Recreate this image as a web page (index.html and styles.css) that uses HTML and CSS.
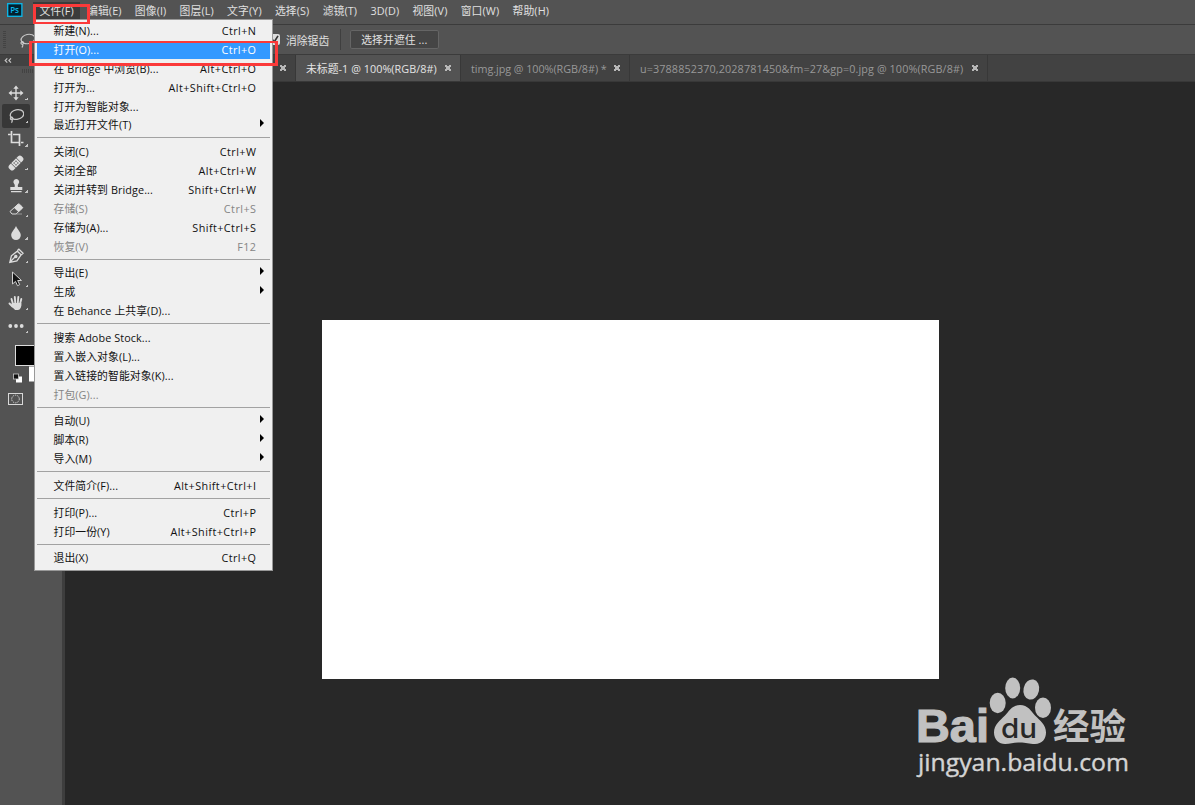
FILE: index.html
```html
<!DOCTYPE html>
<html lang="zh-CN">
<head>
    <meta charset="UTF-8">
    <meta name="viewport" content="width=device-width, initial-scale=1.0">
    <title>Photoshop</title>
    <link rel="stylesheet" href="styles.css">
</head>
<body>
    <div class="menubar">
        <svg class="ps-logo" viewBox="0 0 16 14">
            <rect x="0.7" y="0.7" width="14.2" height="12.6" fill="#03202e" stroke="#0cb9ec" stroke-width="1.3"/>
            <text x="3.2" y="10" font-family="Open Sans, sans-serif" font-size="8" font-weight="600" fill="#0cb9ec">Ps</text>
        </svg>
        <div class="menu-title open">文件(F)</div>
        <div class="menu-title">编辑(E)</div>
        <div class="menu-title">图像(I)</div>
        <div class="menu-title">图层(L)</div>
        <div class="menu-title">文字(Y)</div>
        <div class="menu-title">选择(S)</div>
        <div class="menu-title">滤镜(T)</div>
        <div class="menu-title">3D(D)</div>
        <div class="menu-title">视图(V)</div>
        <div class="menu-title">窗口(W)</div>
        <div class="menu-title">帮助(H)</div>
    </div>

    <div class="options-bar">
        <div class="grip"></div>
        <svg class="lasso-option" viewBox="0 0 18 18" fill="none" stroke="#c8c8c8" stroke-width="1.2">
            <ellipse cx="10" cy="7" rx="7" ry="4.6" transform="rotate(-12 10 7)"/>
            <path d="M4 9.5c-2 1.5-.8 3.2.8 2.6s.6-2.6-.9-2.5M4.6 12c.6 1.5.4 2.5-.8 3.5"/>
        </svg>
        <div class="checkbox">
            <svg viewBox="0 0 10 10"><path d="M2 5l2.2 3L8 1.8" fill="none" stroke="#333" stroke-width="1.6"/></svg>
        </div>
        <span class="option-label">消除锯齿</span>
        <div class="option-divider"></div>
        <div class="mask-button">选择并遮住 ...</div>
    </div>

    <div class="workspace">
        <div class="tools">
            <div class="tools-header">
                <svg viewBox="0 0 8 5" fill="none" stroke="#c4c4c4" stroke-width="1.2"><path d="M3.3.4L1.2 2.5l2.1 2.1M7 .4L4.9 2.5 7 4.6"/></svg>
            </div>
            <div class="tools-grip"></div>
            <div class="tool">
                <svg viewBox="0 0 16 16" fill="#dcdcdc"><path d="M8 .5l2.700 3.200H8.700v3.600h3.600V5.300L15.500 8l-3.200 2.700V8.700H8.700v3.600h2L8 15.500l-2.700-3.200h2V8.700H3.700v2L.5 8l3.200-2.700v2h3.600V3.700h-2z"/></svg>
            </div>
            <div class="tool selected">
                <svg viewBox="0 0 16 16" fill="none" stroke="#c8c8c8" stroke-width="1.3"><ellipse cx="9" cy="6.5" rx="6.8" ry="4.8" transform="rotate(-12 9 6.5)"/><path d="M3.400 9c-1.900 1.400-.8 3 .7 2.500s.6-2.400-.8-2.300M4.100 11.500c.5 1.300.3 2.200-.6 3.200"/></svg>
            </div>
            <div class="tool">
                <svg viewBox="0 0 16 16" fill="none" stroke="#dcdcdc" stroke-width="1.7"><path d="M3.500 0v11.500H12M0 3.500h2.500M5 3.500h6.500V15M13 11.500h2.500"/></svg>
            </div>
            <div class="tool">
                <svg viewBox="0 0 16 16"><g transform="rotate(-45 8 8)"><rect x="-.7" y="4.800" width="17.400" height="6.400" rx="2.500" fill="#dcdcdc"/><path d="M4.300 4.500v7M11.700 4.500v7" stroke="#535353" stroke-width=".8"/><g fill="#535353"><circle cx="6.700" cy="6.700" r=".7"/><circle cx="9.300" cy="6.700" r=".7"/><circle cx="6.700" cy="9.300" r=".7"/><circle cx="9.300" cy="9.300" r=".7"/></g></g></svg>
            </div>
            <div class="tool">
                <svg viewBox="0 0 16 16" fill="#dcdcdc"><path d="M8.300 1a2.900 2.900 0 0 1 2.200 4.800C9.700 6.800 9.700 8 10 9h4.300v3H2.300V9h4.300c.3-1 .3-2.200-.5-3.200A2.900 2.900 0 0 1 8.300 1zM3 13h10.600v1.300H3z"/></svg>
            </div>
            <div class="tool">
                <svg viewBox="0 0 16 16"><path d="M2 10.500L10 3.200q.7-.6 1.400 0l3 2.800q.6.6 0 1.200L8 13H4z" fill="none" stroke="#dcdcdc"/><path d="M6.200 7L10 3.200q.7-.6 1.400 0l3 2.800q.6.6 0 1.200L10.500 11z" fill="#dcdcdc"/><path d="M8 13h6" stroke="#aaa" stroke-width=".8"/></svg>
            </div>
            <div class="tool">
                <svg viewBox="0 0 16 16" fill="#dcdcdc"><path d="M8 1c1 2.900 4.800 6 4.800 9.300a4.800 4.800 0 0 1-9.600 0C3.200 7 7 3.900 8 1z"/></svg>
            </div>
            <div class="tool">
                <svg viewBox="0 0 16 16" fill="none" stroke="#dcdcdc" stroke-width="1.3"><path d="M1.800 14.300L3.400 7.800 9.300 3.200l3.800 3.600-4.200 6zM2 14l5-5M9.200 2.800l1.700-1.600 4.200 4-1.800 1.700"/><circle cx="7.800" cy="8.500" r="1.100" fill="#dcdcdc"/></svg>
            </div>
            <div class="tool">
                <svg viewBox="0 0 16 16"><path d="M4.500 1v12l3-2.600 2 4.300 2.200-1-2-4.200h3.800z" fill="#141414" stroke="#d0d0d0" stroke-width="1"/></svg>
            </div>
            <div class="tool">
                <svg viewBox="0 0 16 16" fill="none" stroke="#dcdcdc" stroke-width="1.9" stroke-linecap="round"><path d="M5 9L3.500 4M7.300 8L6.800 2M9.800 8l.5-6M12 9l1.300-5M4.500 11.500L1.500 8.500"/><path d="M4.500 9h8c.3 2-1 5-2.500 5H7.500L4 10.500z" fill="#dcdcdc"/></svg>
            </div>
            <div class="tool">
                <svg viewBox="0 0 16 16" fill="#dcdcdc"><circle cx="2.300" cy="8" r="1.900"/><circle cx="8" cy="8" r="1.900"/><circle cx="13.700" cy="8" r="1.900"/></svg>
            </div>
            <svg class="swatches" viewBox="0 0 54 70">
                <rect x="29" y="28.500" width="22" height="15" fill="#fff"/>
                <rect x="15.500" y="7.500" width="22" height="20" fill="#000" stroke="#ddd"/>
                <rect x="16" y="38.500" width="6" height="6" fill="#fff"/>
                <rect x="13.500" y="36" width="5" height="5" fill="#111" stroke="#ccc" stroke-width=".8"/>
                <rect x="8.500" y="55.500" width="14" height="11" fill="none" stroke="#d8d8d8"/>
                <circle cx="15.500" cy="61" r="3.800" fill="none" stroke="#d8d8d8" stroke-dasharray="1.4 1"/>
            </svg>
        </div>

        <div class="documents">
            <div class="tabs">
                <div class="tab first"><span></span><i class="close"></i></div>
                <div class="tab active"><span>未标题-1 @ 100%(RGB/8#)</span><i class="close"></i></div>
                <div class="tab timg"><span>timg.jpg @ 100%(RGB/8#) *</span><i class="close"></i></div>
                <div class="tab long"><span>u=3788852370,2028781450&amp;fm=27&amp;gp=0.jpg @ 100%(RGB/8#)</span><i class="close"></i></div>
            </div>
            <div class="canvas-area">
                <div class="artboard"></div>
            </div>
        </div>
    </div>

    <div class="file-menu">
        <div class="item"><span>新建(N)...</span><kbd>Ctrl+N</kbd></div>
        <div class="item highlight"><span>打开(O)...</span><kbd>Ctrl+O</kbd></div>
        <div class="item"><span>在 Bridge 中浏览(B)...</span><kbd>Alt+Ctrl+O</kbd></div>
        <div class="item"><span>打开为...</span><kbd>Alt+Shift+Ctrl+O</kbd></div>
        <div class="item"><span>打开为智能对象...</span></div>
        <div class="item submenu"><span>最近打开文件(T)</span></div>
        <div class="separator"></div>
        <div class="item"><span>关闭(C)</span><kbd>Ctrl+W</kbd></div>
        <div class="item"><span>关闭全部</span><kbd>Alt+Ctrl+W</kbd></div>
        <div class="item"><span>关闭并转到 Bridge...</span><kbd>Shift+Ctrl+W</kbd></div>
        <div class="item disabled"><span>存储(S)</span><kbd>Ctrl+S</kbd></div>
        <div class="item"><span>存储为(A)...</span><kbd>Shift+Ctrl+S</kbd></div>
        <div class="item disabled"><span>恢复(V)</span><kbd>F12</kbd></div>
        <div class="separator"></div>
        <div class="item submenu"><span>导出(E)</span></div>
        <div class="item submenu"><span>生成</span></div>
        <div class="item"><span>在 Behance 上共享(D)...</span></div>
        <div class="separator"></div>
        <div class="item"><span>搜索 Adobe Stock...</span></div>
        <div class="item"><span>置入嵌入对象(L)...</span></div>
        <div class="item"><span>置入链接的智能对象(K)...</span></div>
        <div class="item disabled"><span>打包(G)...</span></div>
        <div class="separator"></div>
        <div class="item submenu"><span>自动(U)</span></div>
        <div class="item submenu"><span>脚本(R)</span></div>
        <div class="item submenu"><span>导入(M)</span></div>
        <div class="separator"></div>
        <div class="item"><span>文件简介(F)...</span><kbd>Alt+Shift+Ctrl+I</kbd></div>
        <div class="separator"></div>
        <div class="item"><span>打印(P)...</span><kbd>Ctrl+P</kbd></div>
        <div class="item"><span>打印一份(Y)</span><kbd>Alt+Shift+Ctrl+P</kbd></div>
        <div class="separator"></div>
        <div class="item"><span>退出(X)</span><kbd>Ctrl+Q</kbd></div>
    </div>

    <div class="mark mark-title"></div>
    <div class="mark mark-item"></div>

    <svg class="watermark" viewBox="900 660 250 145">
        <g fill="#c1c1c1">
            <ellipse cx="997.700" cy="703" rx="8" ry="10.200"/>
            <ellipse cx="1012.700" cy="688" rx="7.500" ry="10.400"/>
            <ellipse cx="1031.300" cy="689.500" rx="7.800" ry="10.200" transform="rotate(12 1031.300 689.500)"/>
            <ellipse cx="1043" cy="707.700" rx="8" ry="10.200"/>
            <path d="M1020 705c-8 0-11 6-15 10.500-5 5-11 9-11 17 0 7 5 11.500 11 11.500 6 0 9-1.500 15-1.500s9 1.500 15 1.500c7 0 11-5 11-11.500 0-8-6-12-11-17-4-4.500-7-10.500-15-10.500z"/>
            <text class="brand" x="916" y="742" font-size="46" textLength="73" lengthAdjust="spacingAndGlyphs">Bai</text>
            <text class="brand-cjk" x="1053" y="740" font-size="36" textLength="73" lengthAdjust="spacingAndGlyphs">经验</text>
        </g>
        <text class="brand-du" x="1001" y="738" font-size="27" textLength="36" lengthAdjust="spacingAndGlyphs" fill="#282828">du</text>
        <text class="site" x="918" y="771" font-size="24" textLength="211" lengthAdjust="spacingAndGlyphs" fill="#d4d4d4">jingyan.baidu.com</text>
    </svg>
</body>
</html>
```

FILE: styles.css
```css
body {
    margin: 0;
    width: 1195px;
    height: 805px;
    display: flex;
    flex-direction: column;
    position: relative;
    overflow: hidden;
    background: #535353;
    color: #e0e0e0;
    font-family: "Open Sans", "Noto Sans CJK SC", sans-serif;
    font-size: 10.8px;
    white-space: nowrap;
}

.menubar {
    display: flex;
    align-items: center;
    height: 25px;
    box-sizing: border-box;
    padding: 0 0 4px 7px;
    border-bottom: 1px solid #3b3b3b;
}

.ps-logo {
    width: 16px;
    height: 14px;
    margin-right: 10px;
}

.menu-title {
    padding: 0 6.6px;
    height: 17px;
    line-height: 17px;
    letter-spacing: 0.13px;
}

.menu-title.open {
    background: #3b3b3b;
}

.options-bar {
    display: flex;
    align-items: center;
    height: 30px;
    box-sizing: border-box;
    border-bottom: 1px solid #3b3b3b;
}

.grip {
    width: 3px;
    height: 17px;
    margin: 0 12px 0 3px;
    background: repeating-linear-gradient(#434343 0 1px, #535353 1px 2px);
}

.lasso-option {
    width: 18px;
    height: 18px;
    margin-top: 2px;
}

.checkbox {
    width: 10px;
    height: 11px;
    margin-left: 234px;
    background: #dcdcdc;
    border-radius: 2px;
}

.checkbox svg {
    display: block;
}

.option-label {
    margin-left: 6px;
    line-height: 16px;
    padding-top: 2px;
}

.option-divider {
    width: 1px;
    height: 21px;
    margin: 0 9px 0 11px;
    background: #3f3f3f;
}

.mask-button {
    width: 89px;
    height: 19px;
    line-height: 20px;
    box-sizing: border-box;
    padding-left: 11px;
    letter-spacing: 0.1px;
    background: #454545;
    box-shadow: 0 0 0 1px #656565 inset;
    border-radius: 2px;
}

.workspace {
    flex: 1;
    display: flex;
}

.tools {
    width: 65px;
    box-sizing: border-box;
    border-right: 3px solid #3e3e3e;
    display: flex;
    flex-direction: column;
}

.tools-header {
    height: 11px;
    background: #424242;
}

.tools-header svg {
    display: block;
    width: 8px;
    height: 5px;
    padding: 3px 0 0 4px;
}

.tools-grip {
    width: 20px;
    height: 4px;
    margin: 3px 0 8px 22px;
    background: repeating-linear-gradient(90deg, #434343 0 1px, #535353 1px 2px);
}

.tool {
    width: 28px;
    height: 23.35px;
    margin-left: 2px;
    display: flex;
    align-items: center;
    justify-content: center;
    background: linear-gradient(135deg, transparent 50%, #c4c4c4 50%) 23px 16px / 3px 3px no-repeat;
}

.tool.selected {
    background-color: #373737;
    border-radius: 2px;
}

.tool svg {
    width: 16px;
    height: 16px;
}

.swatches {
    width: 54px;
    height: 70px;
}

.documents {
    flex: 1;
    display: flex;
    flex-direction: column;
}

.tabs {
    display: flex;
    height: 27px;
    box-sizing: border-box;
    background: #424242;
    border-bottom: 1px solid #383838;
    color: #989898;
}

.tab {
    display: flex;
    align-items: center;
    justify-content: space-between;
    box-sizing: border-box;
    padding: 0 9px 0 10px;
    border-right: 1px solid #383838;
}

.tab.first {
    width: 231px;
}

.tab.active {
    width: 165px;
    background: #535353;
    color: #e4e4e4;
    letter-spacing: 0.05px;
}

.tab.timg {
    width: 169px;
    letter-spacing: -0.05px;
}

.tab.long {
    width: 358px;
    letter-spacing: 0.11px;
}

.close {
    width: 6px;
    height: 6px;
    background:
        linear-gradient(45deg, transparent 38%, #b8b8b8 38% 62%, transparent 62%),
        linear-gradient(-45deg, transparent 38%, #b8b8b8 38% 62%, transparent 62%);
}

.canvas-area {
    flex: 1;
    background: #282828;
    padding: 238px 0 0 257px;
}

.artboard {
    width: 617px;
    height: 359px;
    background: #fff;
}

/* dropdown */
.file-menu {
    position: absolute;
    left: 34px;
    top: 19px;
    width: 239px;
    height: 552px;
    box-sizing: border-box;
    padding: 1.5px 1px 0;
    border: 1px solid #989898;
    background: #f0f0f0;
    color: #111;
}

.item {
    display: flex;
    align-items: center;
    justify-content: space-between;
    height: 18.9px;
    line-height: 18px;
    box-sizing: border-box;
    padding: 0 15px 0 17.5px;
}

.item span {
    letter-spacing: 0.1px;
}

.item kbd {
    font: inherit;
    letter-spacing: 0.44px;
    margin-right: -0.4px;
}

.item.highlight {
    background: linear-gradient(#3399ff, #3399ff) 1px 1px / 233px 18px no-repeat;
    color: #fff;
}

.item.disabled {
    color: #858585;
}

.item.submenu::after {
    content: "";
    margin: -4px -8px 0 0;
    border-left: 4px solid #000;
    border-top: 4px solid transparent;
    border-bottom: 4px solid transparent;
}

.separator {
    height: 1px;
    margin: 2.5px 1px 4.4px;
    background: #a2a2a2;
}

.mark {
    position: absolute;
    box-sizing: border-box;
    border: 3px solid #fb3a3a;
}

.mark-title {
    left: 33px;
    top: 4px;
    width: 57px;
    height: 20px;
    border-bottom-width: 2px;
}

.mark-item {
    left: 29px;
    top: 41px;
    width: 249px;
    height: 25px;
    border-top-width: 2px;
}

.watermark {
    position: absolute;
    left: 900px;
    top: 660px;
    width: 250px;
    height: 145px;
}

.brand {
    font-family: "Liberation Sans", sans-serif;
    font-weight: 700;
    stroke: #c1c1c1;
    stroke-width: 1.2px;
}

.brand-cjk {
    font-family: "Noto Sans CJK SC", sans-serif;
    font-weight: 700;
}

.brand-du {
    font-family: Inter, sans-serif;
    font-weight: 500;
}

.site {
    font-family: "Open Sans", sans-serif;
    stroke: #d4d4d4;
    stroke-width: 0.4px;
}
```
